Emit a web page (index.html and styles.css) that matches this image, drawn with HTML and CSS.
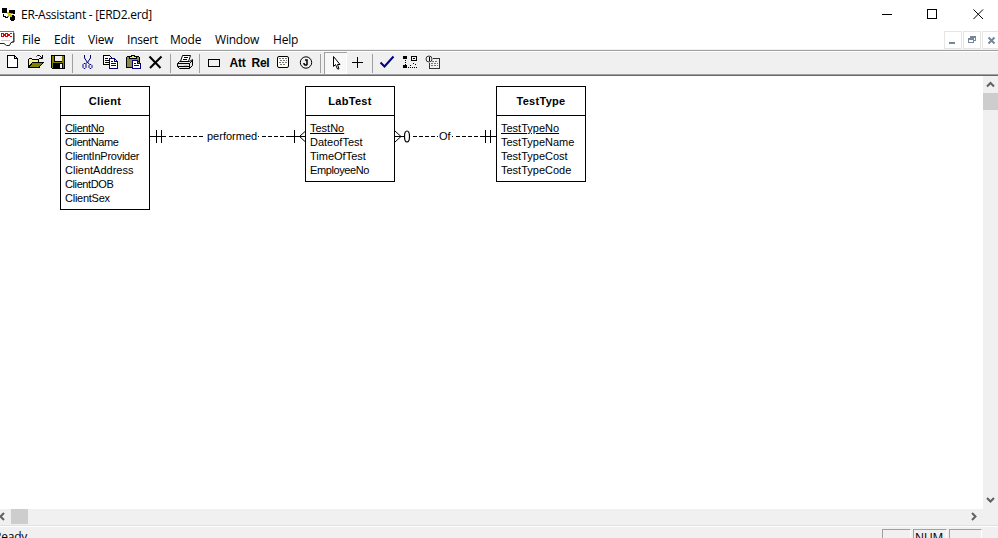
FILE: index.html
```html
<!DOCTYPE html>
<html lang="en">
<head>
<meta charset="utf-8">
<title>ER-Assistant</title>
<link rel="stylesheet" href="styles.css">
</head>
<body>
<div class="window">
  <header class="titlebar">
    <svg class="app-icon" width="16" height="16" viewBox="1 7 16 16"><path d="M2 8h5v5H2zM9 10h6v4H9zM12 15h2v1h1v4h-1v1h-3v-1h-1v-3h2zM3 14h1v2h2v1h2v1H5v-1H3z"/><path fill="#d8c800" d="M7 12h2v1h2v2h1v2h-2v-1H8v-2H7z"/><path fill="#777" d="M11 13h2v1h-2zM7 16h2v1H7z"/></svg>
    <h1 class="title">ER-Assistant - [ERD2.erd]</h1>
    <svg class="window-controls" width="138" height="29" viewBox="860 0 138 29"><path d="M882 14.500h10M927.500 9.500h9v9h-9z"/><path class="smooth" d="M973.500 9.500l9.500 9.500M983 9.500l-9.500 9.500"/></svg>
  </header>
  <nav class="menubar">
    <svg class="doc-icon" width="15" height="18" viewBox="0 30 15 18"><path fill="#fff" stroke="#777" d="M0 31.500H13.500V41.500L11 42.500"/><path class="smooth" stroke="#222" d="M14 33v9L11 42.500 9.500 45.500H6.500L4 43.500H0"/><path class="red" d="M1.500 33v4M2 33.500h1l1 1v1l-1 1H2M6 33.500h1l1 1v1l-1 1H6l-1-1v-1zM12 33.500h-1.500l-1 1v1l1 1H12"/><path stroke="#ccc" d="M1 40.500h9"/></svg>
    <span class="m-file">File</span><span class="m-edit">Edit</span><span class="m-view">View</span><span class="m-insert">Insert</span><span class="m-mode">Mode</span><span class="m-window">Window</span><span class="m-help">Help</span>
    <svg class="mdi-controls" width="54" height="18" viewBox="944 31 54 18"><path stroke="#e5e5e5" d="M944.500 31.500h17v17h-17zM963.500 31.500h17v17h-17zM982.500 31.500h17v17h-17z"/><path fill="#76879b" d="M949 42h6v2h-6z"/><path stroke="#76879b" d="M968.500 38.500h5v4h-5zM968 39.500h6M970.500 38v-1.500h5v4H974M970 37.500h6"/><path class="close" d="M988.500 37.500l6 6M994.500 37.500l-6 6"/></svg>
  </nav>
  <div class="toolbar">
    <svg viewBox="1 52 23 22"><path fill="#fff" stroke="#000" d="M7.500 55.500H14.500L17.500 58.500V67.500H7.500zM14.500 55.500v3h3"/></svg>
    <svg viewBox="24 52 23 22"><path fill="#f6f08a" stroke="#000" d="M28.500 67.500v-8l1-1h2l1 1h6v3"/><path fill="#808000" stroke="#000" d="M28.500 67.500l4-5h10.500l-4 5z"/><path class="smooth" stroke="#000" d="M36.500 56.500l1-1h2l2.500 2.500M42.500 55v3.500H39"/></svg>
    <svg viewBox="47 52 23 22"><path fill="#808000" stroke="#000" d="M51.500 55.500h13v13h-12l-1-1z"/><path d="M54 56h8v6h-8zM53 63h10v5H53z"/><path fill="#efefef" d="M55 56h7v5h-7zM60 64h2v4h-2z"/></svg>
    <i></i>
    <svg viewBox="76 52 23 22"><path class="smooth" stroke="#000080" d="M84.500 55v3l3 4.500M90.500 55v3l-3 4.500M87.500 62l-2 2M87.500 62l2 2.500"/><path class="smooth" stroke="#000080" d="M84 63.500h1l1 1v3l-1 1h-1l-1-1v-3zM90 64.500h1l1 1v2l-1 1h-1l-1-1v-2z"/></svg>
    <svg viewBox="99 52 23 22"><path fill="#fff" stroke="#000" d="M103.500 55.500h6l2 2v7h-8z"/><path stroke="#000" d="M105 58.500h3M105 60.500h4M105 62.500h4"/><path fill="#fff" stroke="#000080" d="M109.500 58.500h5l3 3v7h-8zM114.500 58.500v3h3M111 61.500h2M111 63.500h5M111 65.500h5"/></svg>
    <svg viewBox="122 52 23 22"><path fill="#8b8b50" stroke="#000" d="M127.500 56.500h11l1 1v10h-13v-10z"/><path fill="#f4f060" stroke="#000" d="M129.500 58.500v-2h2v-1h3v1h2v2z"/><path fill="#fff" stroke="#000080" d="M132.500 60.500h5l3 3v5h-8zM137.500 60.500v3h3M134 63.500h2M134 65.500h5"/></svg>
    <svg viewBox="145 52 23 22"><path class="delete" d="M149.500 56.500l11 11.500M161.500 56.500L150 68"/></svg>
    <i></i>
    <svg viewBox="174 52 23 22"><path class="smooth white" stroke="#000" d="M180.500 61.500l2-6h8l-2 6"/><path stroke="#000" d="M184 57.500h4M183 59.500h4"/><path class="smooth gray" stroke="#000" d="M177.500 63.500l2-2h10l3-2v6l-3 3h-10l-2-2zM177.500 63.500h12l3-3M189.500 63.500v5M178 66.500h11"/><path fill="#e7dd00" d="M184 65h4v1h-4z"/></svg>
    <i></i>
    <svg viewBox="203 52 23 22"><path stroke="#000" d="M208.500 59.500h11v7h-11z"/></svg>
    <b>Att</b>
    <b>Rel</b>
    <svg viewBox="272 52 23 22"><rect class="note" x="277.500" y="56.500" width="11" height="11" rx="1.500"/><path class="dots" d="M279 58.500h8M280 60.500h7M279 62.500h8M280 64.500h5"/></svg>
    <svg viewBox="295 52 23 22"><circle class="smooth ring" cx="306" cy="62.500" r="5.700"/><path class="jay" d="M305 60h2v4.500l-.5.500h-1.500l-1-1v-1"/></svg>
    <i></i>
    <svg class="pressed" viewBox="324 52 23 22"><path class="smooth white" stroke="#000" d="M333.500 56.500v10l2-2 2 4.500h1.500l-1.500-4.500h2.500z"/></svg>
    <svg viewBox="347 52 23 22"><path stroke="#000" d="M352 62.500h11M357.500 57v11"/></svg>
    <i></i>
    <svg viewBox="376 52 23 22"><path class="check" d="M380.500 62.500l4 4L393.500 56.500"/></svg>
    <svg viewBox="399 52 23 22"><path d="M403 56h4v3h-4zM403 65h4v3h-4zM413 58h2v1h-2z"/><path stroke="#000" d="M411.500 56.500h5v4h-5z"/><path class="dots black" d="M405.500 60v5M408 67.500h10M410 65.500l3-2 4 2"/></svg>
    <svg viewBox="422 52 23 22"><path stroke="#333" d="M433 58.500h6.500v10h-10V63"/><circle class="smooth" cx="429" cy="59" r="3" stroke="#333"/><path stroke="#000" d="M429.500 57v3h-1"/><path class="dots" d="M432 61.500h6M431 63.500h7M431 65.500h7"/></svg>
  </div>
  <main class="workspace">
    <div class="canvas">
      <svg class="relations" width="983" height="433" viewBox="0 76 983 433">
        <path d="M150 136.500h16M156.500 130v13M161.500 130v13M290 136.500h15M294.500 130v13M395 136.500h9M481 136.500h15M485.500 130v13M490.500 130v13"/>
        <path class="smooth" d="M305 131.500l-5.500 5 5.500 5M395 131l6 5.500-6 5.500"/>
        <ellipse cx="407" cy="136.500" rx="2.500" ry="5.500"/>
        <path class="dashed" d="M169 136.500h34M258 136.500h1M262 136.500h29M413 136.500h22M437 136.500h1M452 136.500h1M456 136.500h26"/>
      </svg>
      <span class="relation performed">performed</span>
      <span class="relation of">Of</span>
      <section class="entity client"><h2>Client</h2><ul><li class="tight"><u>ClientNo</u></li><li class="tight">ClientName</li><li class="snug">ClientInProvider</li><li>ClientAddress</li><li class="tight">ClientDOB</li><li class="snug">ClientSex</li></ul></section>
      <section class="entity labtest"><h2>LabTest</h2><ul><li><u>TestNo</u></li><li>DateofTest</li><li>TimeOfTest</li><li class="tight">EmployeeNo</li></ul></section>
      <section class="entity testtype"><h2>TestType</h2><ul><li><u>TestTypeNo</u></li><li>TestTypeName</li><li>TestTypeCost</li><li>TestTypeCode</li></ul></section>
    </div>
    <div class="vscroll"><svg width="15" height="17" viewBox="0 0 15 17"><path d="M4 10.500l3.500-3.500 3.500 3.500"/></svg><div class="vthumb"></div><svg class="down" width="15" height="17" viewBox="0 0 15 17"><path d="M4 6L7.500 9.500 11 6"/></svg></div>
  </main>
  <div class="hscroll"><svg width="11" height="16" viewBox="0 0 11 16"><path d="M4 4L.5 7.500 4 11"/></svg><div class="hthumb"></div><svg class="right" width="17" height="16" viewBox="0 0 17 16"><path d="M6 4l3.500 3.500L6 11"/></svg></div>
  <footer class="statusbar"><span class="ready">Ready</span><span class="panel p1"></span><span class="panel p2">NUM</span><span class="panel p3"></span></footer>
</div>
</body>
</html>
```

FILE: styles.css
```css
* { box-sizing: border-box; }
body { margin: 0; background: #fff; }
.window {
  width: 998px;
  height: 538px;
  overflow: hidden;
  display: flex;
  flex-direction: column;
  font: 12px "Open Sans", "Noto Sans", sans-serif;
  color: #000;
}
svg { display: block; flex: none; shape-rendering: crispEdges; }
path, circle, ellipse { stroke-width: 1; }
.smooth { shape-rendering: geometricPrecision; fill: none; }

.titlebar { display: flex; height: 30px; flex: none; }
.app-icon { margin: 7px 0 0 1px; }
.title { margin: 0 0 0 4px; font-size: 12px; font-weight: 400; line-height: 30px; letter-spacing: -.28px; white-space: nowrap; }
.window-controls { margin-left: auto; fill: none; stroke: #000; }

.menubar { display: flex; height: 19px; flex: none; line-height: 20px; }
.menubar span { letter-spacing: -.2px; white-space: nowrap; }
.doc-icon { fill: none; margin-right: 7px; }
.red { stroke: #e00000; }
.m-file { width: 32px; }
.m-edit { width: 34px; }
.m-view { width: 39px; }
.m-insert { width: 43px; }
.m-mode { width: 45px; }
.m-window { width: 58px; }
.mdi-controls { margin: 1px 0 0 auto; fill: none; }
.close { stroke: #76879b; stroke-width: 2; shape-rendering: geometricPrecision; }

.toolbar {
  display: flex;
  flex: none;
  height: 27px;
  padding: 1px 1px 0;
  border-top: 1px solid #f0f0f0;
  border-bottom: 1px solid #696969;
  background: #f0f0f0;
  box-shadow: inset 0 1px #a0a0a0, inset 0 2px #fff, inset 0 -1px #a0a0a0;
}
.toolbar svg { width: 23px; height: 22px; margin-top: 1px; }
.toolbar svg path[stroke]:not([fill]) { fill: none; }
.toolbar svg .white { fill: #fff !important; }
.toolbar svg .gray { fill: #e4e4e4 !important; }
.toolbar i { width: 1px; height: 19px; margin: 3px 3px 0 2px; background: #a0a0a0; flex: none; }
.toolbar b { width: 23px; font: bold 12px/22px "Liberation Sans", Arial, sans-serif; text-align: center; letter-spacing: -.3px; padding-top: 1px; }
.pressed { background: #f8f8f8; box-shadow: inset 1px 1px #a0a0a0, inset -1px -1px #fff; }
.delete { fill: none; stroke: #000; stroke-width: 2; shape-rendering: geometricPrecision; }
.check { fill: none; stroke: #000080; stroke-width: 2; shape-rendering: geometricPrecision; }
.note { fill: #fffff0; stroke: #000; shape-rendering: geometricPrecision; }
.dots { fill: none; stroke: #777; stroke-dasharray: 2 1; }
.black { stroke: #000; stroke-dasharray: 1 1; }
.ring { stroke: #000; }
.jay { fill: none; stroke: #000; stroke-width: 1.5; shape-rendering: geometricPrecision; }

.workspace { display: flex; height: 433px; flex: none; }
.canvas { position: relative; width: 983px; font: 11px "Liberation Sans", Arial, sans-serif; }
.relations { fill: none; stroke: #000; }
.relations ellipse { shape-rendering: geometricPrecision; fill: #fff; stroke-width: 1.2; }
.dashed { stroke-dasharray: 4 2; }
.relation { position: absolute; line-height: 14px; top: 53px; }
.performed { left: 207px; }
.of { left: 439px; }
.entity { position: absolute; top: 10px; width: 90px; border: 1px solid #000; background: #fff; }
.client { left: 60px; height: 124px; }
.labtest { left: 305px; height: 96px; }
.testtype { left: 496px; height: 96px; }
.entity h2 { height: 29px; margin: 0; border-bottom: 1px solid #000; font-size: 11px; line-height: 29px; text-align: center; letter-spacing: .3px; }
.entity ul { list-style: none; margin: 0; padding: 5px 0 0 4px; line-height: 14px; }
.entity li { height: 14px; white-space: nowrap; }
.entity .tight { letter-spacing: -.4px; }
.entity .snug { letter-spacing: -.25px; }

.vscroll { width: 15px; display: flex; flex-direction: column; background: #f0f0f0; }
.vthumb { height: 17px; background: #cdcdcd; }
.down { margin-top: auto; }
.vscroll path, .hscroll path { fill: none; stroke: #606060; stroke-width: 2; shape-rendering: geometricPrecision; }
.hscroll { display: flex; flex: none; height: 16px; background: #f0f0f0; }
.hthumb { width: 17px; height: 15px; background: #cdcdcd; }
.right { margin: 0 15px 0 auto; }

.statusbar { display: flex; flex: none; height: 13px; overflow: hidden; padding-top: 4px; background: #f0f0f0; box-shadow: inset 0 1px #dfdfdf, inset 0 2px #fff; }
.ready { margin-left: -6px; line-height: 16px; letter-spacing: -.2px; margin-right: auto; }
.panel { height: 18px; border: 1px solid #a0a0a0; border-right-color: #fff; line-height: 15px; margin-right: 2px; padding-left: 1px; letter-spacing: -.1px; }
.p1 { width: 29px; }
.p2 { width: 34px; }
.p3 { width: 33px; margin-right: 16px; }
```
